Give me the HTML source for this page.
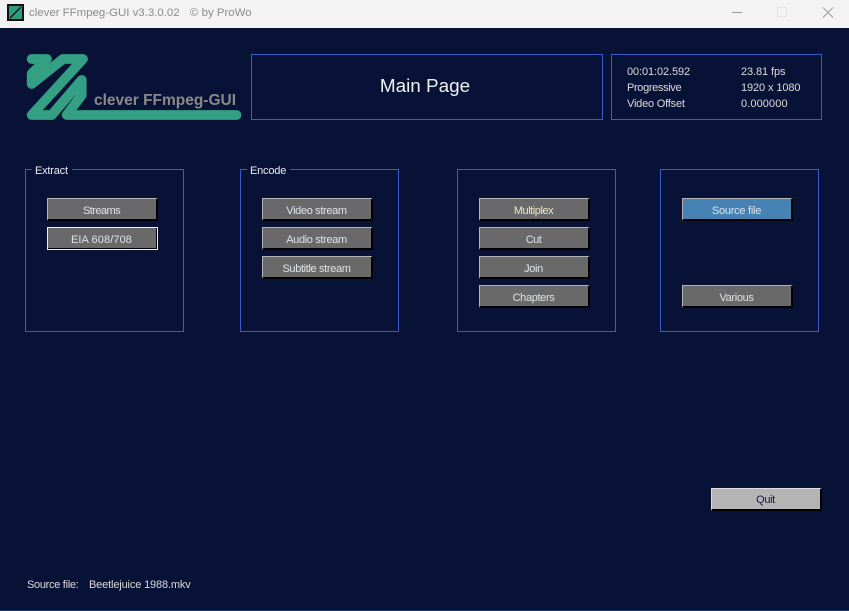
<!DOCTYPE html>
<html>
<head>
<meta charset="utf-8">
<style>
html,body{margin:0;padding:0}
body{width:849px;height:611px;overflow:hidden;background:#071236;position:relative;font-family:"Liberation Sans",sans-serif;font-size:11px;color:#dcdcdc}
.abs,.p,.b,.t{position:absolute}
.tb{position:absolute;left:0;top:0;width:849px;height:28px;background:#f3f3f3}
.tt{position:absolute;top:5px;font-size:11.45px;color:#8b8b8b;white-space:pre;line-height:16px}
.p{border:1px solid #3a5cc8;box-sizing:border-box}
.b{width:111px;height:23px;box-sizing:border-box;background:#696969;border-top:1px solid #b4b4b4;border-left:1px solid #b4b4b4;border-right:2px solid #000;border-bottom:2px solid #000;text-align:center;line-height:24px;color:#dfe3e6;font-size:11px;letter-spacing:-.35px;padding-right:1px}
.t{white-space:pre;line-height:14px}
.lg{position:absolute;background:#071236;color:#eee;line-height:14px;font-size:11px;letter-spacing:-.2px}
</style>
</head>
<body>
<div class="tb"></div>
<svg class="abs" style="left:7px;top:4px" width="17" height="17" viewBox="0 0 17 17">
<rect width="17" height="17" fill="#111"/>
<rect x="2" y="2" width="13" height="13" fill="#2f9c80"/>
<path d="M3 14L14 3" stroke="#111" stroke-width="1.4"/>
</svg>
<div class="tt" style="left:29px">clever FFmpeg-GUI v3.3.0.02</div>
<div class="tt" style="left:190px">© by ProWo</div>
<svg class="abs" style="left:720px;top:0" width="129" height="28" viewBox="0 0 129 28">
<path d="M12 12.5H22" stroke="#9a9a9a" stroke-width="1"/>
<rect x="57.5" y="7.5" width="9" height="9" rx="1" fill="none" stroke="#e0e0e0"/>
<path d="M103 7.5L113 17.5M113 7.5L103 17.5" stroke="#9a9a9a" stroke-width="1" fill="none"/>
</svg>

<svg class="abs" style="left:0;top:0" width="260" height="130" viewBox="0 0 260 130">
<path d="M31.7 59H47L31.7 73.5V84L63 59H83L31.7 115H51.7L81.7 80V95L66.7 115H236.5" fill="none" stroke="#33a083" stroke-width="9.8" stroke-linecap="round" stroke-linejoin="round"/>
<text x="94" y="105" font-family="Liberation Sans" font-weight="bold" font-size="16" fill="#8a8a8a" textLength="142" lengthAdjust="spacingAndGlyphs">clever FFmpeg-GUI</text>
</svg>

<div class="p" style="left:251px;top:54px;width:352px;height:66px"></div>
<div class="t" style="left:251px;top:75px;width:348px;text-align:center;font-size:18.9px;line-height:24px;color:#f2f2f2">Main Page</div>

<div class="p" style="left:611px;top:54px;width:211px;height:66px"></div>
<div class="t" style="left:627px;top:65px;letter-spacing:-.1px">00:01:02.592</div>
<div class="t" style="left:627px;top:81px;letter-spacing:-.35px">Progressive</div>
<div class="t" style="left:627px;top:97px;letter-spacing:-.2px">Video Offset</div>
<div class="t" style="left:741px;top:65px;letter-spacing:-.1px">23.81 fps</div>
<div class="t" style="left:741px;top:81px;letter-spacing:-.1px">1920 x 1080</div>
<div class="t" style="left:741px;top:97px;letter-spacing:.1px">0.000000</div>

<div class="p" style="left:25px;top:169px;width:159px;height:163px"></div>
<div class="lg" style="left:32px;top:164px;padding:0 4px 0 3px">Extract</div>
<div class="p" style="left:240px;top:169px;width:159px;height:163px"></div>
<div class="lg" style="left:247px;top:164px;padding:0 4px 0 3px">Encode</div>
<div class="p" style="left:457px;top:169px;width:159px;height:163px"></div>
<div class="p" style="left:660px;top:169px;width:159px;height:163px"></div>

<div class="b" style="left:47px;top:198px;letter-spacing:-.55px">Streams</div>
<div class="b" style="left:47px;top:227px;outline:1px solid #f0f0f0;outline-offset:-1px;letter-spacing:.1px">EIA 608/708</div>

<div class="b" style="left:262px;top:198px">Video stream</div>
<div class="b" style="left:262px;top:227px">Audio stream</div>
<div class="b" style="left:262px;top:256px">Subtitle stream</div>

<div class="b" style="left:479px;top:198px;color:#ece6c8;letter-spacing:-.45px">Multiplex</div>
<div class="b" style="left:479px;top:227px;letter-spacing:-.5px">Cut</div>
<div class="b" style="left:479px;top:256px">Join</div>
<div class="b" style="left:479px;top:285px">Chapters</div>

<div class="b" style="left:682px;top:198px;background:#4682b4;letter-spacing:-.25px">Source file</div>
<div class="b" style="left:682px;top:285px">Various</div>

<div class="b" style="left:711px;top:488px;background:#b4b4b4;border-top-color:#ddd;border-left-color:#ddd;color:#1a1a3a;line-height:22px">Quit</div>

<div class="t" style="left:27px;top:578px;letter-spacing:-.3px">Source file:</div>
<div class="t" style="left:89px;top:578px;letter-spacing:-.15px">Beetlejuice 1988.mkv</div>

<div class="abs" style="left:0;top:610px;width:849px;height:1px;background:#1d3470"></div>
</body>
</html>
